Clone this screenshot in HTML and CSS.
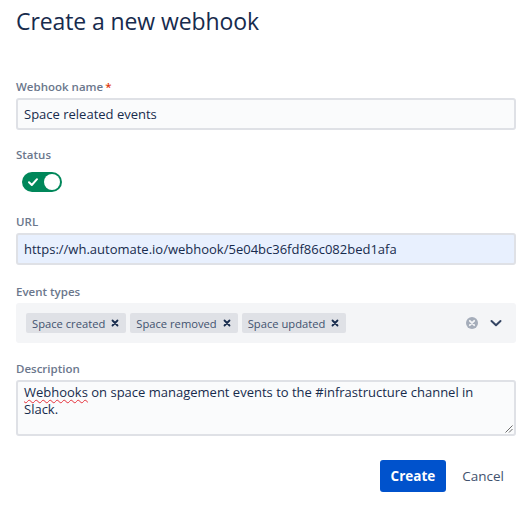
FILE: index.html
```html
<!DOCTYPE html>
<html>
<head>
<meta charset="utf-8">
<link rel="stylesheet" href="styles.css">
</head>
<body>
<div class="page">
  <h1 class="title">Create a new webhook</h1>

  <div class="field f-name">
    <div class="label">Webhook name<span class="req">*</span></div>
    <div class="input">Space releated events</div>
  </div>

  <div class="field f-status">
    <div class="label">Status</div>
    <div class="toggle-wrap">
      <span class="toggle">
        <svg class="check" width="12" height="12" viewBox="0 0 12 12"><path d="M2 6.3 L4.8 9 L10 3.2" fill="none" stroke="#fff" stroke-width="2" stroke-linecap="round" stroke-linejoin="round"/></svg>
        <span class="knob"></span>
      </span>
    </div>
  </div>

  <div class="field f-url">
    <div class="label">URL</div>
    <div class="input input-url">https://wh.automate.io/webhook/5e04bc36fdf86c082bed1afa</div>
  </div>

  <div class="field f-events">
    <div class="label">Event types</div>
    <div class="select">
      <div class="tags">
        <span class="tag">Space created<svg class="tag-x" width="8" height="8" viewBox="0 0 8 8"><path d="M1.5 1.5 L6.5 6.5 M6.5 1.5 L1.5 6.5" stroke="#172b4d" stroke-width="1.8" stroke-linecap="round"/></svg></span>
        <span class="tag">Space removed<svg class="tag-x" width="8" height="8" viewBox="0 0 8 8"><path d="M1.5 1.5 L6.5 6.5 M6.5 1.5 L1.5 6.5" stroke="#172b4d" stroke-width="1.8" stroke-linecap="round"/></svg></span>
        <span class="tag">Space updated<svg class="tag-x" width="8" height="8" viewBox="0 0 8 8"><path d="M1.5 1.5 L6.5 6.5 M6.5 1.5 L1.5 6.5" stroke="#172b4d" stroke-width="1.8" stroke-linecap="round"/></svg></span>
      </div>
      <div class="indicators">
        <svg class="clear" width="14" height="14" viewBox="0 0 14 14"><circle cx="7" cy="7" r="6" fill="#a5adba"/><path d="M4.8 4.8 L9.2 9.2 M9.2 4.8 L4.8 9.2" stroke="#f4f5f7" stroke-width="1.8" stroke-linecap="round"/></svg>
        <svg class="chev" width="14" height="14" viewBox="0 0 14 14"><path d="M2.5 5 L7 9.3 L11.5 5" fill="none" stroke="#344563" stroke-width="2" stroke-linecap="round" stroke-linejoin="round"/></svg>
      </div>
    </div>
  </div>

  <div class="field f-desc">
    <div class="label">Description</div>
    <div class="textarea"><span class="typo">Webhooks</span> on space management events to the #infrastructure channel in Slack.<svg class="grip" width="9" height="9" viewBox="0 0 9 9"><path d="M8.5 1.5 L1.5 8.5 M8.5 5 L5 8.5" stroke="#6b6b6b" stroke-width="1"/></svg></div>
  </div>

  <div class="actions">
    <button class="btn btn-primary">Create</button>
    <button class="btn btn-subtle">Cancel</button>
  </div>
</div>
</body>
</html>
```

FILE: styles.css
```css
* { box-sizing: border-box; }
html, body { margin: 0; padding: 0; background: #fff; }
body {
  font-family: "Open Sans", "Noto Sans", sans-serif;
  color: #172b4d;
}
.page {
  width: 516px;
  padding: 0 0 0 16px;
}
.title {
  margin: 0;
  padding-top: 5px;
  font-size: 23px;
  line-height: 32px;
  font-weight: 500;
  color: #172b4d;
  letter-spacing: -0.1px;
}
.label {
  font-size: 11.5px;
  line-height: 16px;
  font-weight: 600;
  color: #6b778c;
  margin-bottom: 3px;
}
.req { color: #de350b; margin-left: 2px; }
.f-name { margin-top: 42px; }
.f-status { margin-top: 17px; }
.f-url { margin-top: 19px; }
.f-events { margin-top: 19px; }
.f-desc { margin-top: 18px; }

.input {
  height: 32px;
  border: 2px solid #dfe1e6;
  border-radius: 3px;
  background: #fafbfc;
  font-size: 13px;
  line-height: 28px;
  padding: 0 6px;
  color: #172b4d;
}
.input-url { background: #e8f0fe; border-color: #dfe1e6; }

.toggle-wrap { padding: 6px 0 0 6px; height: 29px; }
.toggle {
  display: flex;
  align-items: center;
  justify-content: space-between;
  width: 40px;
  height: 20px;
  border-radius: 10px;
  background: #00875a;
  padding: 0 2px 0 5px;
}
.check { display: block; }
.knob {
  width: 16px;
  height: 16px;
  border-radius: 50%;
  background: #fff;
}

.select {
  height: 40px;
  background: #f4f5f7;
  border: 2px solid #f4f5f7;
  border-radius: 3px;
  display: flex;
  align-items: center;
  justify-content: space-between;
  padding: 0 11px 0 8px;
}
.tags { display: flex; gap: 4px; }
.tag {
  display: inline-flex;
  align-items: center;
  height: 20px;
  background: #dfe1e6;
  border-radius: 2px;
  font-size: 11.2px;
  color: #42526e;
  padding: 0 7px 0 6px;
}
.tag-x { display: block; margin-left: 6px; }
.indicators { display: flex; align-items: center; gap: 10px; }
.clear, .chev { display: block; }

.textarea {
  position: relative;
  height: 56px;
  border: 2px solid #dfe1e6;
  border-radius: 3px;
  background: #fafbfc;
  font-size: 13px;
  line-height: 17px;
  padding: 2px 6px;
  color: #172b4d;
}
.typo {
  text-decoration: underline wavy #e5303b;
  text-decoration-thickness: 1px;
  text-underline-offset: 2px;
}
.grip { position: absolute; right: 1px; bottom: 1px; }

.actions {
  display: flex;
  justify-content: flex-end;
  gap: 4px;
  margin-top: 24px;
  padding-right: 0;
}
.btn {
  font-family: inherit;
  height: 32px;
  border: none;
  border-radius: 3px;
  font-size: 13.5px;
  padding: 0 11px;
  cursor: pointer;
}
.btn-primary { background: #0052cc; color: #fff; font-weight: 700; }
.btn-subtle { background: transparent; color: #42526e; padding: 0 12px; }
```
